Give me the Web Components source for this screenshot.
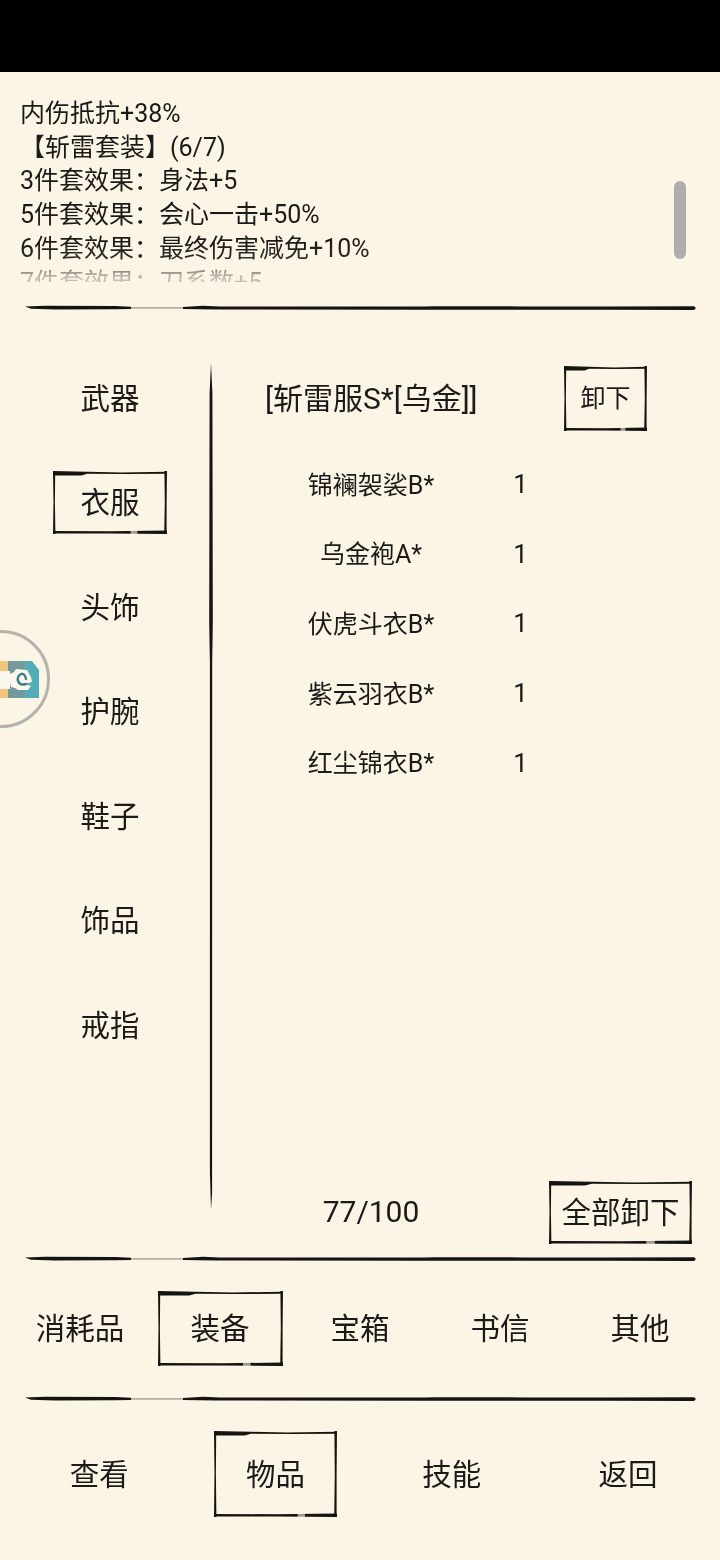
<!DOCTYPE html>
<html lang="zh">
<head>
<meta charset="utf-8">
<title>物品</title>
<style>
  html, body { margin: 0; padding: 0; background: #fcf4e4; }
  body { font-family: "Roboto", "Noto Sans CJK SC", sans-serif; color: #1a1a18; }
</style>
</head>
<body>
<game-screen></game-screen>

<script>
const INK = '#141412';

class InkRule extends HTMLElement {
  constructor() {
    super();
    this.attachShadow({mode: 'open'});
    this.shadowRoot.innerHTML = `
      <style>
        :host { display: block; height: 6px; margin: 0 25px; }
        svg { display: block; width: 671px; height: 6px; }
      </style>
      <svg viewBox="0 0 671 6">
        <path fill="${INK}" d="M0 1.6 L20 .8 L90 1.1 L106 1.8 L106 4 L90 4.3 L30 4.6 L6 3.8Z"/>
        <path fill="${INK}" opacity=".3" d="M106 2 L158 2 L158 3.8 L106 3.8Z"/>
        <path fill="${INK}" d="M158 1.9 L178 .8 L195 1.6 L400 1.6 L410 1.2 L500 1.4 L580 1.4 L669 1.2 L671 3 L669 4.9 L580 4.7 L400 4.7 L190 4.5 L158 4Z"/>
      </svg>`;
  }
}
customElements.define('ink-rule', InkRule);

// caixa com moldura de pincel, so desenha a moldura quando tem active
class InkBox extends HTMLElement {
  constructor() {
    super();
    this.attachShadow({mode: 'open'});
  }
  connectedCallback() {
    const w = +this.getAttribute('w');
    const h = +this.getAttribute('h');
    const frame = this.hasAttribute('active') ? `
      <svg viewBox="0 0 ${w} ${h}" width="${w}" height="${h}">
        <path fill="${INK}" d="M0 0 L${w*.3} .8 L${w*.6} 1.4 L${w} .8 L${w} 2.8 L${w*.62} 3 L${w*.3} 2.8 L${w*.25} 4.4 L0 4.6Z"/>
        <path fill="${INK}" d="M0 ${h-3} L${w*.5} ${h-2.8} L${w} ${h-3.4} L${w} ${h} L${w*.5} ${h-.6} L0 ${h-.4}Z"/>
        <path fill="#fcf4e4" opacity=".6" d="M${w*.68} ${h-4} L${w*.74} ${h-4} L${w*.74} ${h} L${w*.68} ${h}Z"/>
        <path fill="${INK}" d="M0 0 L2.2 0 L1.9 ${h*.5} L2.4 ${h} L0 ${h} L.5 ${h*.5}Z"/>
        <path fill="${INK}" d="M${w-2.6} 0 L${w} 0 L${w-.4} ${h*.5} L${w-.4} ${h} L${w-2.8} ${h} L${w-2.2} ${h*.5}Z"/>
      </svg>` : '';
    this.shadowRoot.innerHTML = `
      <style>
        :host { display: inline-flex; position: relative; align-items: center; justify-content: center;
                width: ${w}px; height: ${h}px; flex: none; padding-bottom: 5px; box-sizing: border-box; }
        svg { position: absolute; left: 0; top: 0; }
      </style>
      ${frame}<slot></slot>`;
  }
}
customElements.define('ink-box', InkBox);

class InfoPanel extends HTMLElement {
  constructor() {
    super();
    this.attachShadow({mode: 'open'});
    this.shadowRoot.innerHTML = `
      <style>
        :host { display: block; position: relative; height: 233px; }
        .text { height: 185px; padding: 25px 0 0 20px; overflow: hidden; font-size: 25px; line-height: 33.7px;
                -webkit-mask-image: linear-gradient(#000 170px, rgba(0,0,0,.9) 188px, rgba(0,0,0,.25) 205px);
                mask-image: linear-gradient(#000 170px, rgba(0,0,0,.9) 188px, rgba(0,0,0,.25) 205px); }
        .text div { white-space: nowrap; }
        .bar { position: absolute; left: 674px; top: 109px; width: 12px; height: 78px; border-radius: 6px; background: #adadad; }
      </style>
      <div class="text">
        <div>内伤抵抗+38%</div>
        <div>【斩雷套装】(6/7)</div>
        <div>3件套效果：身法+5</div>
        <div>5件套效果：会心一击+50%</div>
        <div>6件套效果：最终伤害减免+10%</div>
        <div>7件套效果：刀系数+5</div>
      </div>
      <div class="bar"></div>`;
  }
}
customElements.define('info-panel', InfoPanel);

class SideMenu extends HTMLElement {
  constructor() {
    super();
    this.attachShadow({mode: 'open'});
    const itens = ['武器', '衣服', '头饰', '护腕', '鞋子', '饰品', '戒指'];
    this.shadowRoot.innerHTML = `
      <style>
        :host { display: flex; flex-direction: column; align-items: center; gap: 41.5px;
                width: 114px; padding: 3.5px 42px 0 53px; font-size: 29.5px; }
      </style>
      ${itens.map((t, i) => `<ink-box w="114" h="63" ${i == 1 ? 'active' : ''}>${t}</ink-box>`).join('')}`;
  }
}
customElements.define('side-menu', SideMenu);

class EquipRow extends HTMLElement {
  constructor() {
    super();
    this.attachShadow({mode: 'open'});
    this.shadowRoot.innerHTML = `
      <style>
        :host { display: grid; grid-template-columns: 212px 86px; height: 36px; align-items: center;
                font-size: 25px; white-space: nowrap; }
        .nome { text-align: center; margin-top: -3px; }
        .qtd { text-align: center; margin-left: 1px; font-size: 26px; }
      </style>
      <div class="nome"><slot></slot></div>
      <div class="qtd">${this.getAttribute('qtd')}</div>`;
  }
}
customElements.define('equip-row', EquipRow);

class EquipPanel extends HTMLElement {
  constructor() {
    super();
    this.attachShadow({mode: 'open'});
    this.shadowRoot.innerHTML = `
      <style>
        :host { display: flex; flex-direction: column; flex: 1; padding: 3px 0 12px 52px; }
        .head, .foot { display: flex; align-items: center; white-space: nowrap; }
        .titulo, .total { width: 212px; text-align: center; font-size: 30px; margin-top: -5px; }
        .total { margin-top: -3px; }
        .head ink-box { margin-left: 87px; font-size: 25px; }
        .lista { display: flex; flex-direction: column; gap: 33.7px; margin-top: 35px; }
        .foot { margin-top: auto; }
        .foot ink-box { margin-left: 72px; font-size: 29.5px; }
      </style>
      <div class="head">
        <div class="titulo">[斩雷服S*[乌金]]</div>
        <ink-box w="83" h="65" active>卸下</ink-box>
      </div>
      <div class="lista">
        <equip-row qtd="1">锦襕袈裟B*</equip-row>
        <equip-row qtd="1">乌金袍A*</equip-row>
        <equip-row qtd="1">伏虎斗衣B*</equip-row>
        <equip-row qtd="1">紫云羽衣B*</equip-row>
        <equip-row qtd="1">红尘锦衣B*</equip-row>
      </div>
      <div class="foot">
        <div class="total">77/100</div>
        <ink-box w="143" h="63" active>全部卸下</ink-box>
      </div>`;
  }
}
customElements.define('equip-panel', EquipPanel);

class TabRow extends HTMLElement {
  constructor() {
    super();
    this.attachShadow({mode: 'open'});
  }
  connectedCallback() {
    const itens = this.getAttribute('itens').split(',');
    const ativo = +this.getAttribute('ativo');
    const w = this.getAttribute('w');
    const h = this.getAttribute('h');
    this.shadowRoot.innerHTML = `
      <style>
        :host { display: grid; grid-template-columns: repeat(${itens.length}, ${this.getAttribute('col')}px); justify-items: center;
                margin-left: ${this.getAttribute('ml')}px; padding-top: 29px; font-size: 29.5px;
                height: ${this.getAttribute('alto')}px; box-sizing: border-box; }
        ink-box { white-space: nowrap; }
      </style>
      ${itens.map((t, i) => `<ink-box w="${w}" h="${h}" ${i == ativo ? 'active' : ''}>${t}</ink-box>`).join('')}`;
  }
}
customElements.define('tab-row', TabRow);

// botao flutuante colado na esquerda
class FloatBadge extends HTMLElement {
  constructor() {
    super();
    this.attachShadow({mode: 'open'});
    this.shadowRoot.innerHTML = `
      <style>
        :host { display: block; position: absolute; left: 0; top: 630px; width: 52px; height: 98px; }
        svg { display: block; }
      </style>
      <svg width="52" height="98" viewBox="0 0 52 98">
        <circle cx="1" cy="49" r="47.5" fill="#fcf4e4" stroke="#b4b2ac" stroke-width="3"/>
        <rect x="0" y="31" width="8" height="37" fill="#f0c67c"/>
        <path d="M8 31 H25 V68 H8Z" fill="#74999f"/>
        <path d="M25 31 H32 L39 40 V68 H25Z" fill="#52adb7"/>
        <path d="M0 41 H10 V59 H0Z" fill="#fdf8ee"/>
        <path d="M10 44 L14 42 L16 39 L27 40 L31 47 L32 52 L24 54 L31 56 L28 60 L18 60 L15 58 L11 57 L10 52Z" fill="#fdf8ee"/>
        <path d="M26 49 Q25 43 21 44 Q17 46 18 51 Q20 56 26 54" fill="none" stroke="#3f7f8a" stroke-width="2.4" stroke-linecap="round"/>
      </svg>`;
  }
}
customElements.define('float-badge', FloatBadge);

class GameScreen extends HTMLElement {
  constructor() {
    super();
    this.attachShadow({mode: 'open'});
    this.shadowRoot.innerHTML = `
      <style>
        :host { display: block; position: relative; width: 720px; height: 1560px; overflow: hidden;
                background: #fcf4e4; filter: blur(.4px); }
        .status { height: 72px; background: #000; }
        .main { display: flex; height: 945px; padding-top: 52px; box-sizing: border-box; }
        .linha { flex: none; width: 4px; height: 847px; }
        .linha svg { display: block; }
      </style>
      <div class="status"></div>
      <info-panel></info-panel>
      <ink-rule></ink-rule>
      <div class="main">
        <side-menu></side-menu>
        <div class="linha">
          <svg width="4" height="847" viewBox="0 0 4 847">
            <path fill="${INK}" d="M2 0 L3.4 30 L3.8 260 L3.2 300 L3.1 830 L2 847 L.9 810 L.9 300 L.2 260 L.6 30Z"/>
          </svg>
        </div>
        <equip-panel></equip-panel>
      </div>
      <ink-rule></ink-rule>
      <tab-row itens="消耗品,装备,宝箱,书信,其他" ativo="1" w="125" h="75" ml="10" col="140" alto="134"></tab-row>
      <ink-rule></ink-rule>
      <tab-row itens="查看,物品,技能,返回" ativo="1" w="123" h="86" ml="11" col="176.3" alto="158"></tab-row>
      <float-badge></float-badge>`;
  }
}
customElements.define('game-screen', GameScreen);
</script>
</body>
</html>
